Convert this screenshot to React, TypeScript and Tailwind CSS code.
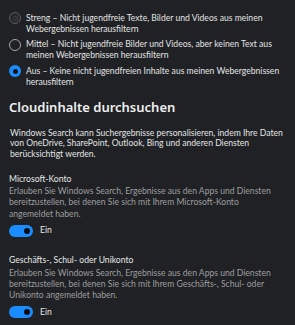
import React from "react";

const options = [
  { label: "Streng – Nicht jugendfreie Texte, Bilder und Videos aus meinen Webergebnissen herausfiltern", state: "dim" },
  { label: "Mittel – Nicht jugendfreie Bilder und Videos, aber keinen Text aus meinen Webergebnissen herausfiltern", state: "off" },
  { label: "Aus – Keine nicht jugendfreien Inhalte aus meinen Webergebnissen herausfiltern", state: "on" },
];

const Radio = ({ state }: { state: string }) => {
  if (state === "on") {
    return (
      <div className="mt-[-0.5px] flex h-[12px] w-[12px] shrink-0 items-center justify-center rounded-full bg-[#1a8cff]">
        <div className="h-[5px] w-[5px] rounded-full bg-[#141414]" />
      </div>
    );
  }
  if (state === "dim") {
    return (
      <div className="mt-[-0.5px] flex h-[12px] w-[12px] shrink-0 items-center justify-center rounded-full border border-[#5c5c5c] bg-[#26282b]">
        <div className="h-[5px] w-[5px] rounded-full border border-[#444]" />
      </div>
    );
  }
  return <div className="mt-[-0.5px] h-[12px] w-[12px] shrink-0 rounded-full border border-[#a6a6a6]" />;
};

const Toggle = () => (
  <div className="flex items-center gap-[7px]">
    <div className="flex h-[12px] w-[24px] items-center justify-end rounded-full bg-[#1a8cff] pr-[3px]">
      <div className="h-[6px] w-[6px] rounded-full bg-[#0d0d0d]" />
    </div>
    <span className="leading-[11px] text-[#e6e6e6]">Ein</span>
  </div>
);

export default function App() {
  return (
    <div className="h-[325px] w-[295px] overflow-hidden bg-[#1f2125] pl-[9px] pr-[12px] pt-[12px] font-['Lato',sans-serif] text-[8.6px] text-[#e4e4e4]">
      <div className="flex flex-col gap-[4px]">
        {options.map((o) => (
          <div key={o.label} className="flex items-start gap-[5px] pt-[0.5px]">
            <Radio state={o.state} />
            <p className="leading-[11px]">{o.label}</p>
          </div>
        ))}
      </div>

      <h2 className="mt-[10px] font-['Noto_Sans',sans-serif] text-[13px] font-semibold leading-[18px] text-[#f0f0f0]">Cloudinhalte durchsuchen</h2>

      <p className="mt-[12px] pl-[1px] leading-[10.5px]">
        Windows Search kann Suchergebnisse personalisieren, indem Ihre Daten von OneDrive, SharePoint, Outlook, Bing und anderen Diensten berücksichtigt werden.
      </p>

      <div className="mt-[14.5px]">
        <h3 className="leading-[11px] text-[#e8e8e8]">Microsoft-Konto</h3>
        <p className="mt-[1.5px] leading-[11.3px] text-[#9e9e9e]">
          Erlauben Sie Windows Search, Ergebnisse aus den Apps und Diensten bereitzustellen, bei denen Sie sich mit Ihrem Microsoft-Konto angemeldet haben.
        </p>
        <div className="mt-[5px]">
          <Toggle />
        </div>
      </div>

      <div className="mt-[18px]">
        <h3 className="leading-[11px] text-[#e8e8e8]">Geschäfts-, Schul- oder Unikonto</h3>
        <p className="mt-[2px] leading-[11.3px] text-[#9e9e9e]">
          Erlauben Sie Windows Search, Ergebnisse aus den Apps und Diensten bereitzustellen, bei denen Sie sich mit Ihrem Geschäfts-, Schul- oder Unikonto angemeldet haben.
        </p>
        <div className="mt-[4.5px]">
          <Toggle />
        </div>
      </div>
    </div>
  );
}
